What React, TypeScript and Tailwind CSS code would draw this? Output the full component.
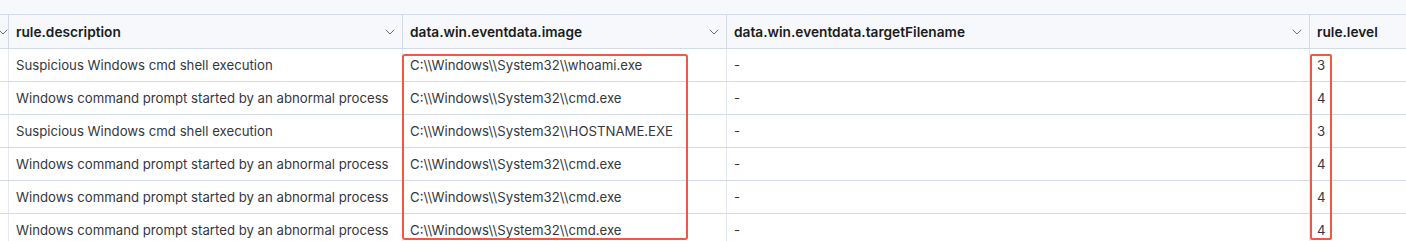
const rows = [
  { desc: "Suspicious Windows cmd shell execution", image: "C:\\\\Windows\\\\System32\\\\whoami.exe", level: "3" },
  { desc: "Windows command prompt started by an abnormal process", image: "C:\\\\Windows\\\\System32\\\\cmd.exe", level: "4" },
  { desc: "Suspicious Windows cmd shell execution", image: "C:\\\\Windows\\\\System32\\\\HOSTNAME.EXE", level: "3" },
  { desc: "Windows command prompt started by an abnormal process", image: "C:\\\\Windows\\\\System32\\\\cmd.exe", level: "4" },
  { desc: "Windows command prompt started by an abnormal process", image: "C:\\\\Windows\\\\System32\\\\cmd.exe", level: "4" },
  { desc: "Windows command prompt started by an abnormal process", image: "C:\\\\Windows\\\\System32\\\\cmd.exe", level: "4" },
];

function Chevron() {
  return (
    <svg width="10" height="6" viewBox="0 0 10 6" fill="none" className="shrink-0">
      <path d="M1 1l4 4 4-4" stroke="#69707d" strokeWidth="1" strokeLinecap="round" strokeLinejoin="round" />
    </svg>
  );
}

const cols = "grid grid-cols-[9px_394px_324px_583px_96px]";

function HeaderCell({ label, chevron = true }: { label?: string; chevron?: boolean }) {
  return (
    <div className="h-[33px] flex items-center justify-between px-[7px] pt-px border-r border-[#d3dae6] last:border-r-0">
      {label && <span className="font-semibold text-[13.7px] text-[#1a1c21]">{label}</span>}
      {chevron && <Chevron />}
    </div>
  );
}

export default function App() {
  return (
    <div
      className="relative w-[1406px] h-[241px] overflow-hidden bg-white"
      style={{ fontFamily: "Inter, 'Liberation Sans', sans-serif" }}
    >
      <div className="h-[14px] bg-[#f7f8fc]" />
      <div className={`${cols} bg-[#f7f8fc] border-y border-[#d3dae6]`}>
        <div className="h-[33px] flex items-center justify-end -ml-[6px] border-r border-[#d3dae6]">
          <Chevron />
        </div>
        <HeaderCell label="rule.description" />
        <HeaderCell label="data.win.eventdata.image" />
        <HeaderCell label="data.win.eventdata.targetFilename" />
        <HeaderCell label="rule.level" chevron={false} />
      </div>
      {rows.map((r, i) => (
        <div key={i} className={`${cols} border-b border-[#d3dae6] text-[13.2px] text-[#343741]`}>
          <div className="h-[32px] border-r border-[#e4e8ef]" />
          <div className="h-[32px] flex items-center px-[7px] pt-[2px] border-r border-[#e4e8ef] whitespace-nowrap">{r.desc}</div>
          <div className="h-[32px] flex items-center px-[7px] pt-[2px] border-r border-[#e4e8ef] whitespace-nowrap">{r.image}</div>
          <div className="h-[32px] flex items-center px-[7px] pt-[2px] border-r border-[#e4e8ef]">-</div>
          <div className="h-[32px] flex items-center px-[7px] pt-[2px]">{r.level}</div>
        </div>
      ))}
      <div className="absolute left-[402px] top-[54px] w-[286px] h-[186px] border-2 border-[#ec5a3f] rounded-[3px]" />
      <div className="absolute left-[1310px] top-[54px] w-[22px] h-[186px] border-2 border-[#ec5a3f] rounded-[2px]" />
    </div>
  );
}
